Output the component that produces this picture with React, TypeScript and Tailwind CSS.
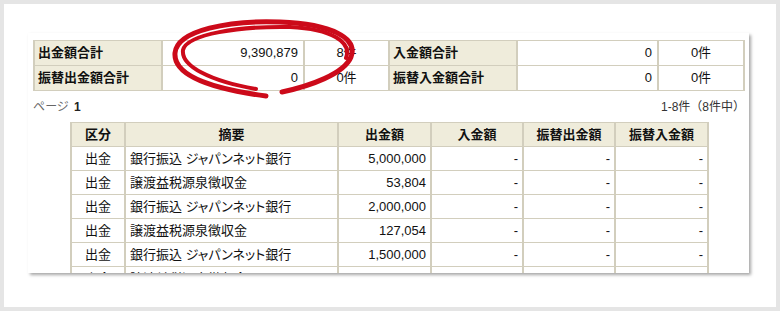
const font = "font-['Liberation_Sans','Noto_Sans_CJK_JP',sans-serif]";
const palt = "[font-feature-settings:'palt']";

const rows = [
  { kubun: "出金", tekiyo: "銀行振込 ジャパンネット銀行", out: "5,000,000" },
  { kubun: "出金", tekiyo: "譲渡益税源泉徴収金", out: "53,804" },
  { kubun: "出金", tekiyo: "銀行振込 ジャパンネット銀行", out: "2,000,000" },
  { kubun: "出金", tekiyo: "譲渡益税源泉徴収金", out: "127,054" },
  { kubun: "出金", tekiyo: "銀行振込 ジャパンネット銀行", out: "1,500,000" },
  { kubun: "出金", tekiyo: "譲渡益税源泉徴収金", out: "53,804" },
];

const cell = "border-x-2 border-y border-[#d2cebd]";
const label = `${cell} bg-[#efecdb] pl-[3px] text-left font-bold`;
const th = `${cell} bg-[#efecdb] text-center font-bold`;

function SummaryTable() {
  return (
    <table className="w-[710px] table-fixed border-collapse text-[13px] text-[#111]">
      <colgroup>
        <col className="w-[128px]" />
        <col className="w-[142px]" />
        <col className="w-[85px]" />
        <col className="w-[128px]" />
        <col className="w-[141px]" />
        <col className="w-[86px]" />
      </colgroup>
      <tbody>
        <tr className="h-[25px]">
          <td className={label}>出金額合計</td>
          <td className={`${cell} pr-[5px] text-right`}>9,390,879</td>
          <td className={`${cell} text-center`}>8件</td>
          <td className={label}>入金額合計</td>
          <td className={`${cell} pr-[5px] text-right`}>0</td>
          <td className={`${cell} text-center`}>0件</td>
        </tr>
        <tr className="h-[25px]">
          <td className={label}>振替出金額合計</td>
          <td className={`${cell} pr-[5px] text-right`}>0</td>
          <td className={`${cell} text-center`}>0件</td>
          <td className={label}>振替入金額合計</td>
          <td className={`${cell} pr-[5px] text-right`}>0</td>
          <td className={`${cell} text-center`}>0件</td>
        </tr>
      </tbody>
    </table>
  );
}

function DetailTable() {
  return (
    <table className="w-[637px] table-fixed border-collapse text-[13px] text-[#111]">
      <colgroup>
        <col className="w-[54px]" />
        <col className="w-[213px]" />
        <col className="w-[93px]" />
        <col className="w-[92px]" />
        <col className="w-[92px]" />
        <col className="w-[93px]" />
      </colgroup>
      <thead>
        <tr className="h-[24px]">
          <th className={th}>区分</th>
          <th className={th}>摘要</th>
          <th className={th}>出金額</th>
          <th className={th}>入金額</th>
          <th className={th}>振替出金額</th>
          <th className={th}>振替入金額</th>
        </tr>
      </thead>
      <tbody>
        {rows.map((r, i) => (
          <tr key={i} className="h-[24px]">
            <td className={`${cell} text-center`}>{r.kubun}</td>
            <td className={`${cell} pl-[4px] text-left ${palt}`}>{r.tekiyo}</td>
            <td className={`${cell} pr-[4px] text-right`}>{r.out}</td>
            <td className={`${cell} pr-[4px] text-right`}>-</td>
            <td className={`${cell} pr-[4px] text-right`}>-</td>
            <td className={`${cell} pr-[4px] text-right`}>-</td>
          </tr>
        ))}
      </tbody>
    </table>
  );
}

export default function App() {
  return (
    <div className={`relative h-[311px] w-[780px] border-4 border-[#e5e5e5] bg-white pl-[24px] pt-[29px] ${font}`}>
      <div className="h-[240px] w-[721px] overflow-hidden bg-white shadow-[2px_2px_3px_rgba(0,0,0,0.35)]">
        <div className="pl-[5px] pt-[7px]">
          <SummaryTable />
        </div>
        <div className="mt-[9px] flex w-[717px] items-center justify-between pl-[5px] text-[12px] leading-[14px]">
          <span className={`text-[#666] ${palt}`}>
            ページ <b className="ml-[2px] text-[#222]">1</b>
          </span>
          <span className="text-[#333]">1-8件（8件中）</span>
        </div>
        <div className="mt-[8px] pl-[42px]">
          <DetailTable />
        </div>
      </div>
      <svg
        className="absolute left-[156px] top-[4px]"
        width="210"
        height="95"
        viewBox="0 0 210 95"
        fill="none"
      >
        <path
          d="M106 88 C60 82 13 70 15 45 C17 22 70 12 120 14 C172 16 198 30 191 49 C184 66 150 78 122 84"
          stroke="#cc0a1a"
          strokeWidth="5"
          strokeLinecap="round"
        />
        <path
          d="M96 81 C50 73 21 58 23 42 C27 26 80 18 130 19 C172 21 192 34 186 50"
          stroke="#cc0a1a"
          strokeWidth="4"
          strokeLinecap="round"
        />
      </svg>
    </div>
  );
}
